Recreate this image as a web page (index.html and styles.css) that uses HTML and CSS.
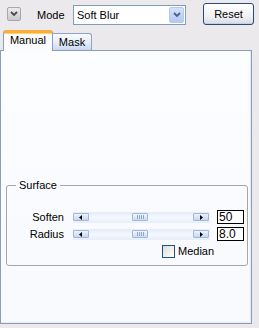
FILE: index.html
```
<!DOCTYPE html>
<html>
<head>
<meta charset="utf-8">
<link rel="stylesheet" href="styles.css">
</head>
<body>
<div class="app">
  <div class="toolbar">
    <button class="collapse"><svg width="8" height="6" viewBox="0 0 8 6"><path d="M1 1 L4 4 L7 1" fill="none" stroke="#4a4a4a" stroke-width="1.8"/></svg></button>
    <span class="mode-label">Mode</span>
    <div class="select">
      <span class="select-text">Soft Blur</span>
      <span class="select-btn"><svg width="8" height="6" viewBox="0 0 8 6"><path d="M1 1 L4 4 L7 1" fill="none" stroke="#4d6185" stroke-width="1.8"/></svg></span>
    </div>
    <button class="reset">Reset</button>
  </div>
  <div class="tabs">
    <div class="tab active">Manual</div>
    <div class="tab">Mask</div>
  </div>
  <div class="panel">
    <fieldset class="group">
      <legend>Surface</legend>
      <div class="row">
        <span class="label">Soften</span>
        <div class="slider">
          <span class="sbtn"><svg width="4" height="5" viewBox="0 0 4 5"><path d="M3 0 L0 2.5 L3 5Z" fill="#000"/></svg></span>
          <span class="thumb"><i></i><i></i><i></i><i></i></span>
          <span class="sbtn end"><svg width="4" height="5" viewBox="0 0 4 5"><path d="M1 0 L4 2.5 L1 5Z" fill="#000"/></svg></span>
        </div>
        <span class="numbox">50</span>
      </div>
      <div class="row">
        <span class="label">Radius</span>
        <div class="slider">
          <span class="sbtn"><svg width="4" height="5" viewBox="0 0 4 5"><path d="M3 0 L0 2.5 L3 5Z" fill="#000"/></svg></span>
          <span class="thumb"><i></i><i></i><i></i><i></i></span>
          <span class="sbtn end"><svg width="4" height="5" viewBox="0 0 4 5"><path d="M1 0 L4 2.5 L1 5Z" fill="#000"/></svg></span>
        </div>
        <span class="numbox">8.0</span>
      </div>
      <div class="check-row">
        <span class="checkbox"></span>
        <span class="check-label">Median</span>
      </div>
    </fieldset>
  </div>
</div>
</body>
</html>
```
FILE: styles.css
```
html, body {
  margin: 0;
  padding: 0;
  background: #ebe9eb;
}
body {
  font-family: "Liberation Sans", Arial, sans-serif;
  font-size: 11px;
  line-height: 13px;
  color: #000;
}
.app {
  width: 259px;
  height: 328px;
}
.toolbar {
  display: flex;
  align-items: flex-start;
  height: 30px;
  padding-left: 7px;
  box-sizing: border-box;
}
.collapse {
  width: 14px;
  height: 14px;
  margin: 7px 0 0 0;
  padding: 0;
  border: 1px solid #a8a8a8;
  border-radius: 2px;
  background: linear-gradient(#ececec, #c9c9c9);
  display: flex;
  align-items: center;
  justify-content: center;
  box-sizing: border-box;
}
.mode-label {
  margin-left: 16px;
  margin-top: 9px;
  width: 36px;
}
.select {
  width: 113px;
  height: 20px;
  margin-top: 5px;
  border: 1px solid #7f9db9;
  background: #fff;
  box-sizing: border-box;
  display: flex;
  padding: 1px;
}
.select-text {
  flex: 1;
  padding: 2px 0 0 2px;
}
.select-btn {
  width: 15px;
  height: 16px;
  box-sizing: border-box;
  border: 1px solid #b5c8ef;
  border-radius: 2px;
  background: linear-gradient(#d6e2fc, #b3c8f5);
  display: flex;
  align-items: center;
  justify-content: center;
}
.reset {
  margin: 3px 0 0 17px;
  width: 51px;
  height: 22px;
  padding: 0;
  border: 1px solid #2a4a7a;
  border-radius: 3px;
  background: linear-gradient(#ffffff, #f2f2f4 60%, #d8dce6);
  box-shadow: inset 0 -1px 0 #c9cfdc;
  font-family: "Liberation Sans", Arial, sans-serif;
  font-size: 11px;
  line-height: 13px;
  color: #000;
  box-sizing: border-box;
}
.tabs {
  display: flex;
  align-items: flex-end;
  height: 20px;
  padding-left: 3px;
}
.tab {
  box-sizing: border-box;
  text-align: center;
}
.tab.active {
  position: relative;
  z-index: 1;
  width: 50px;
  height: 21px;
  margin-bottom: -1px;
  border: 1px solid #8c9dba;
  border-bottom: none;
  border-top: 3px solid #f5b040;
  border-radius: 3px 3px 0 0;
  background: #fcfcfe;
  padding-top: 1px;
  box-shadow: inset 0 1px 0 #ffd36a;
}
.tab:not(.active) {
  width: 39px;
  height: 17px;
  border: 1px solid #8ea4c4;
  border-bottom: none;
  border-left: none;
  border-radius: 0 3px 0 0;
  background: linear-gradient(#fafcff, #e3ebf8 60%, #c9d7ee);
  padding-top: 2px;
}
.panel {
  width: 252px;
  height: 274px;
  box-sizing: border-box;
  border: 1px solid #8c9dba;
  background: linear-gradient(#fcfdff, #f7f9fd);
  box-shadow: inset -1px -1px 0 #e6ebf3;
  padding: 128px 3px 0 5px;
}
.group {
  margin: 0;
  border: 1px solid #a6a6a6;
  border-radius: 3px;
  padding: 18px 3px 5px 9px;
  height: 87px;
  box-sizing: border-box;
}
.group legend {
  padding: 0 3px;
  line-height: 13px;
}
.row {
  display: flex;
  align-items: center;
  height: 14px;
  margin-bottom: 3px;
}
.label {
  width: 48px;
  text-align: right;
}
.slider {
  margin-left: 9px;
  width: 137px;
  height: 11px;
  box-sizing: border-box;
  display: flex;
  align-items: center;
  background: linear-gradient(#e3ecfa, #f4f8fe 50%, #e6eefb);
}
.sbtn {
  width: 16px;
  height: 8px;
  box-sizing: border-box;
  border: 1px solid #a3b8d8;
  border-radius: 1px;
  background: linear-gradient(#eef3fc, #c8d7f0);
  display: flex;
  align-items: center;
  justify-content: center;
}
.sbtn.end {
  margin-left: auto;
  margin-right: 1px;
}
.thumb {
  margin-left: 43px;
  width: 16px;
  height: 8px;
  box-sizing: border-box;
  border: 1px solid #a3b8d8;
  border-radius: 1px;
  background: linear-gradient(#f2f6fd, #cddbf2);
  display: flex;
  align-items: center;
  justify-content: center;
  gap: 1px;
}
.thumb i {
  width: 1px;
  height: 4px;
  background: #8ea6c9;
}
.numbox {
  margin-left: 7px;
  width: 27px;
  height: 14px;
  box-sizing: border-box;
  border: 1px solid #000;
  background: #fff;
  font-size: 12px;
  line-height: 12px;
  padding-left: 1px;
}
.check-row {
  display: flex;
  align-items: center;
  margin-top: 4px;
  margin-left: 146px;
}
.checkbox {
  width: 13px;
  height: 13px;
  box-sizing: border-box;
  border: 1px solid #1c5180;
  background: linear-gradient(135deg, #dcdcd7, #ffffff);
}
.check-label {
  margin-left: 3px;
}
```
